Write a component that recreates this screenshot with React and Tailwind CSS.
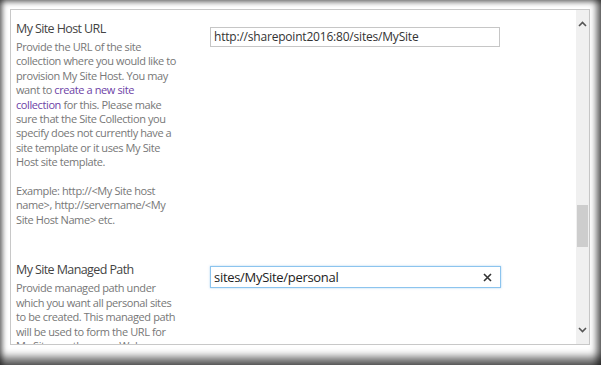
import React from 'react'

const font = { fontFamily: '"Open Sans", "Noto Sans", sans-serif' }

const Section = ({ title, children, input, inputTop }) => (
    <div className='flex'>
        <div className='w-[194px] shrink-0'>
            <div className='text-[12.5px] leading-[20px] tracking-[-0.6px] text-[#444]'>{title}</div>
            <div className='mt-[1px] text-[11px] leading-[14.4px] tracking-[-0.4px] text-[#777] whitespace-nowrap'>{children}</div>
        </div>
        <div className={inputTop}>{input}</div>
    </div>
)

const App = () => {
    return (
        <div style={font} className='relative w-[601px] h-[365px] bg-white pt-[9px] pl-[10px] pr-[11px] pb-[20px] overflow-hidden'>
            <div className='flex h-full border border-[#c8c8c8] bg-white'>
                <div className='flex-1 overflow-hidden pl-[5px] pt-[9px]'>
                    <Section
                        title='My Site Host URL'
                        inputTop='mt-[8px]'
                        input={
                            <div className='w-[290px] h-[20px] border border-[#c6c6c6] flex items-center pl-[3px] text-[12px] tracking-[-0.2px] text-[#333]'>
                                http://sharepoint2016:80/sites/MySite
                            </div>
                        }
                    >
                        Provide the URL of the site<br />
                        collection where you would like to<br />
                        provision My Site Host. You may<br />
                        want to <a href='#' className='text-[#6d3fa6]'>create a new site</a><br />
                        <a href='#' className='text-[#6d3fa6]'>collection</a> for this. Please make<br />
                        sure that the Site Collection you<br />
                        specify does not currently have a<br />
                        site template or it uses My Site<br />
                        Host site template.<br />
                        <br />
                        Example: http://&lt;My Site host<br />
                        name&gt;, http://servername/&lt;My<br />
                        Site Host Name&gt; etc.
                    </Section>
                    <div className='mt-[33px]'>
                        <Section
                            title='My Site Managed Path'
                            inputTop='mt-[6px]'
                            input={
                                <div className='w-[291px] h-[22px] border border-[#8cc4ee] shadow-[0_0_2px_rgba(120,180,230,0.6)] flex items-center pl-[3px] pr-[8px] text-[13px] tracking-[-0.3px] text-[#222]'>
                                    <span className='flex-1'>sites/MySite/personal</span>
                                    <svg width='9' height='9' viewBox='0 0 9 9'>
                                        <path d='M1 1L8 8M8 1L1 8' stroke='#333' strokeWidth='1.6' />
                                    </svg>
                                </div>
                            }
                        >
                            Provide managed path under<br />
                            which you want all personal sites<br />
                            to be created. This managed path<br />
                            will be used to form the URL for<br />
                            My Sites on the same Web
                        </Section>
                    </div>
                </div>
                <div className='w-[13px] shrink-0 bg-[#f0f0f0] flex flex-col items-center'>
                    <svg className='mt-[11px]' width='9' height='6' viewBox='0 0 9 6'>
                        <path d='M1 5L4.5 1.5L8 5' stroke='#555' strokeWidth='1.6' fill='none' />
                    </svg>
                    <div className='mt-[178px] w-[11px] h-[42px] bg-[#cdcdcd]' />
                    <div className='flex-1' />
                    <svg className='mb-[11px]' width='9' height='6' viewBox='0 0 9 6'>
                        <path d='M1 1L4.5 4.5L8 1' stroke='#555' strokeWidth='1.6' fill='none' />
                    </svg>
                </div>
            </div>
            <div className='pointer-events-none absolute inset-0 shadow-[inset_5px_0_5px_-2px_rgba(0,0,0,0.45),inset_0_5px_5px_-2px_rgba(0,0,0,0.4),inset_-8px_0_6px_-3px_rgba(0,0,0,0.55),inset_0_-12px_9px_-4px_rgba(0,0,0,0.6)]' />
        </div>
    )
}

export default App
